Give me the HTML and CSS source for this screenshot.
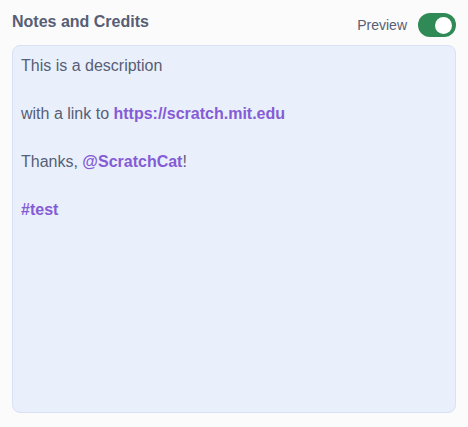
FILE: index.html
```html
<!DOCTYPE html>
<html>
<head>
<meta charset="utf-8">
<link rel="stylesheet" href="styles.css">
</head>
<body>
<div class="panel">
  <div class="header">
    <div class="title">Notes and Credits</div>
    <div class="preview">
      <span class="preview-label">Preview</span>
      <span class="toggle"><span class="knob"></span></span>
    </div>
  </div>
  <div class="notes">
    <p class="line">This is a description</p>
    <p class="line">with a link to <a class="link">https://scratch.mit.edu</a></p>
    <p class="line">Thanks, <a class="link">@ScratchCat</a>!</p>
    <p class="line"><a class="link">#test</a></p>
  </div>
</div>
</body>
</html>
```
FILE: styles.css
```css
html, body {
  margin: 0;
  height: 100%;
}
body {
  background: #fbfbfb;
  font-family: "Liberation Sans", Arial, sans-serif;
  color: #575e75;
}
.panel {
  box-sizing: border-box;
  height: 100%;
  padding: 13px 12px 14px;
  display: flex;
  flex-direction: column;
}
.header {
  display: flex;
  justify-content: space-between;
  align-items: flex-start;
  margin-bottom: 8px;
}
.title {
  font-size: 16px;
  font-weight: bold;
  color: #575e75;
}
.preview {
  display: flex;
  align-items: center;
  gap: 11px;
  height: 24px;
}
.preview-label {
  font-size: 14px;
  color: #575e75;
}
.toggle {
  box-sizing: border-box;
  width: 38px;
  height: 24px;
  border-radius: 12px;
  background: #2f8a56;
  display: flex;
  align-items: center;
  justify-content: flex-end;
  padding-right: 4px;
}
.knob {
  width: 17px;
  height: 17px;
  border-radius: 50%;
  background: #ffffff;
}
.notes {
  flex: 1;
  box-sizing: border-box;
  background: #e9f0fc;
  border: 1px solid #d7e2f4;
  border-radius: 8px;
  padding: 8px;
  font-size: 16px;
  line-height: 24px;
}
.line {
  margin: 0 0 24px;
}
.link {
  color: #855cd6;
  font-weight: bold;
  text-decoration: none;
}
```
